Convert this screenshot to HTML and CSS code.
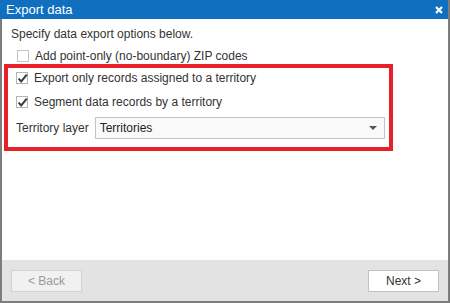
FILE: index.html
```html
<!DOCTYPE html>
<html lang="en">
<head>
    <meta charset="UTF-8">
    <title>Export data</title>
    <link rel="stylesheet" href="styles.css">
</head>
<body>
    <div class="dialog">
        <div class="titlebar">
            <span class="title">Export data</span>
            <svg class="close" width="8" height="8" viewBox="0 0 8 8">
                <path d="M1 1L7 7M7 1L1 7" stroke="#fff" stroke-width="2.2" fill="none"/>
            </svg>
        </div>

        <div class="content">
            <div class="intro">Specify data export options below.</div>

            <label class="option option-outside">
                <span class="checkbox"></span>
                <span>Add point-only (no-boundary) ZIP codes</span>
            </label>

            <!-- highlighted options -->
            <div class="highlight">
                <label class="option">
                    <span class="checkbox checked">
                        <svg width="11" height="11" viewBox="0 0 11 11"><path d="M1.6 5.6L4.2 8.4L9.8 1.6" stroke="#3c3c3c" stroke-width="2" fill="none"/></svg>
                    </span>
                    <span>Export only records assigned to a territory</span>
                </label>
                <label class="option option-second">
                    <span class="checkbox checked">
                        <svg width="11" height="11" viewBox="0 0 11 11"><path d="M1.6 5.6L4.2 8.4L9.8 1.6" stroke="#3c3c3c" stroke-width="2" fill="none"/></svg>
                    </span>
                    <span>Segment data records by a territory</span>
                </label>
                <div class="field">
                    <span class="field-label">Territory layer</span>
                    <div class="select">
                        <span>Territories</span>
                        <span class="arrow"></span>
                    </div>
                </div>
            </div>
        </div>

        <div class="footer">
            <button class="btn btn-disabled">&lt; Back</button>
            <button class="btn">Next &gt;</button>
        </div>
    </div>
</body>
</html>
```

FILE: styles.css
```css
/* Wizard-style export dialog */
body {
    margin: 0;
    background: #fff;
    font-family: "Liberation Sans", Arial, sans-serif;
    font-size: 12px;
    color: #333;
}

.dialog {
    width: 450px;
    height: 303px;
    box-sizing: border-box;
    border-right: 2px solid #7d7d7d;
    border-bottom: 2px solid #7d7d7d;
    display: flex;
    flex-direction: column;
}

.titlebar {
    height: 19px;
    background: #1070bf;
    color: #fff;
    display: flex;
    align-items: center;
    justify-content: space-between;
    padding: 0 5px 0 6px;
}

.title {
    font-size: 13px;
}

.close {
    display: block;
}

.content {
    flex: 1;
    border-left: 2px solid #7d7d7d;
    padding-top: 7px;
}

.intro {
    line-height: 16px;
    padding-left: 9px;
}

.option {
    display: flex;
    align-items: center;
    gap: 6px;
    height: 16px;
}

.option-outside {
    margin-top: 6px;
    padding-left: 15px;
}

.checkbox {
    width: 12px;
    height: 12px;
    box-sizing: border-box;
    border: 1px solid #c6c6c6;
    background: #fff;
    display: flex;
    align-items: center;
    justify-content: center;
}

.checkbox.checked {
    border-color: #b4b4b4;
}

.checkbox svg {
    flex: none;
    overflow: visible;
}

.highlight {
    width: 389px;
    margin-left: 2px;
    box-sizing: border-box;
    border: 4px solid #e8202a;
    padding: 2px 0 8px 8px;
}

.option-second {
    margin-top: 8px;
}

.field {
    display: flex;
    align-items: center;
    gap: 6px;
    margin-top: 7px;
}

.select {
    width: 290px;
    height: 22px;
    box-sizing: border-box;
    border: 1px solid #c3c3c3;
    background: #f9f9f9;
    display: flex;
    align-items: center;
    justify-content: space-between;
    padding: 0 7px 0 4px;
    color: #222;
}

.arrow {
    width: 0;
    height: 0;
    border-left: 4px solid transparent;
    border-right: 4px solid transparent;
    border-top: 4px solid #555;
}

.footer {
    height: 41px;
    box-sizing: border-box;
    background: #e3e3e3;
    border-left: 2px solid #7d7d7d;
    display: flex;
    align-items: center;
    justify-content: space-between;
    padding: 0 9px;
}

.btn {
    width: 71px;
    height: 22px;
    border: 1px solid #c2c2c2;
    background: #fff;
    font-family: "Liberation Sans", Arial, sans-serif;
    font-size: 12px;
    color: #333;
    padding: 0;
}

.btn-disabled {
    background: #f1f1f1;
    border-color: #d2d2d2;
    color: #9a9a9a;
}
```
